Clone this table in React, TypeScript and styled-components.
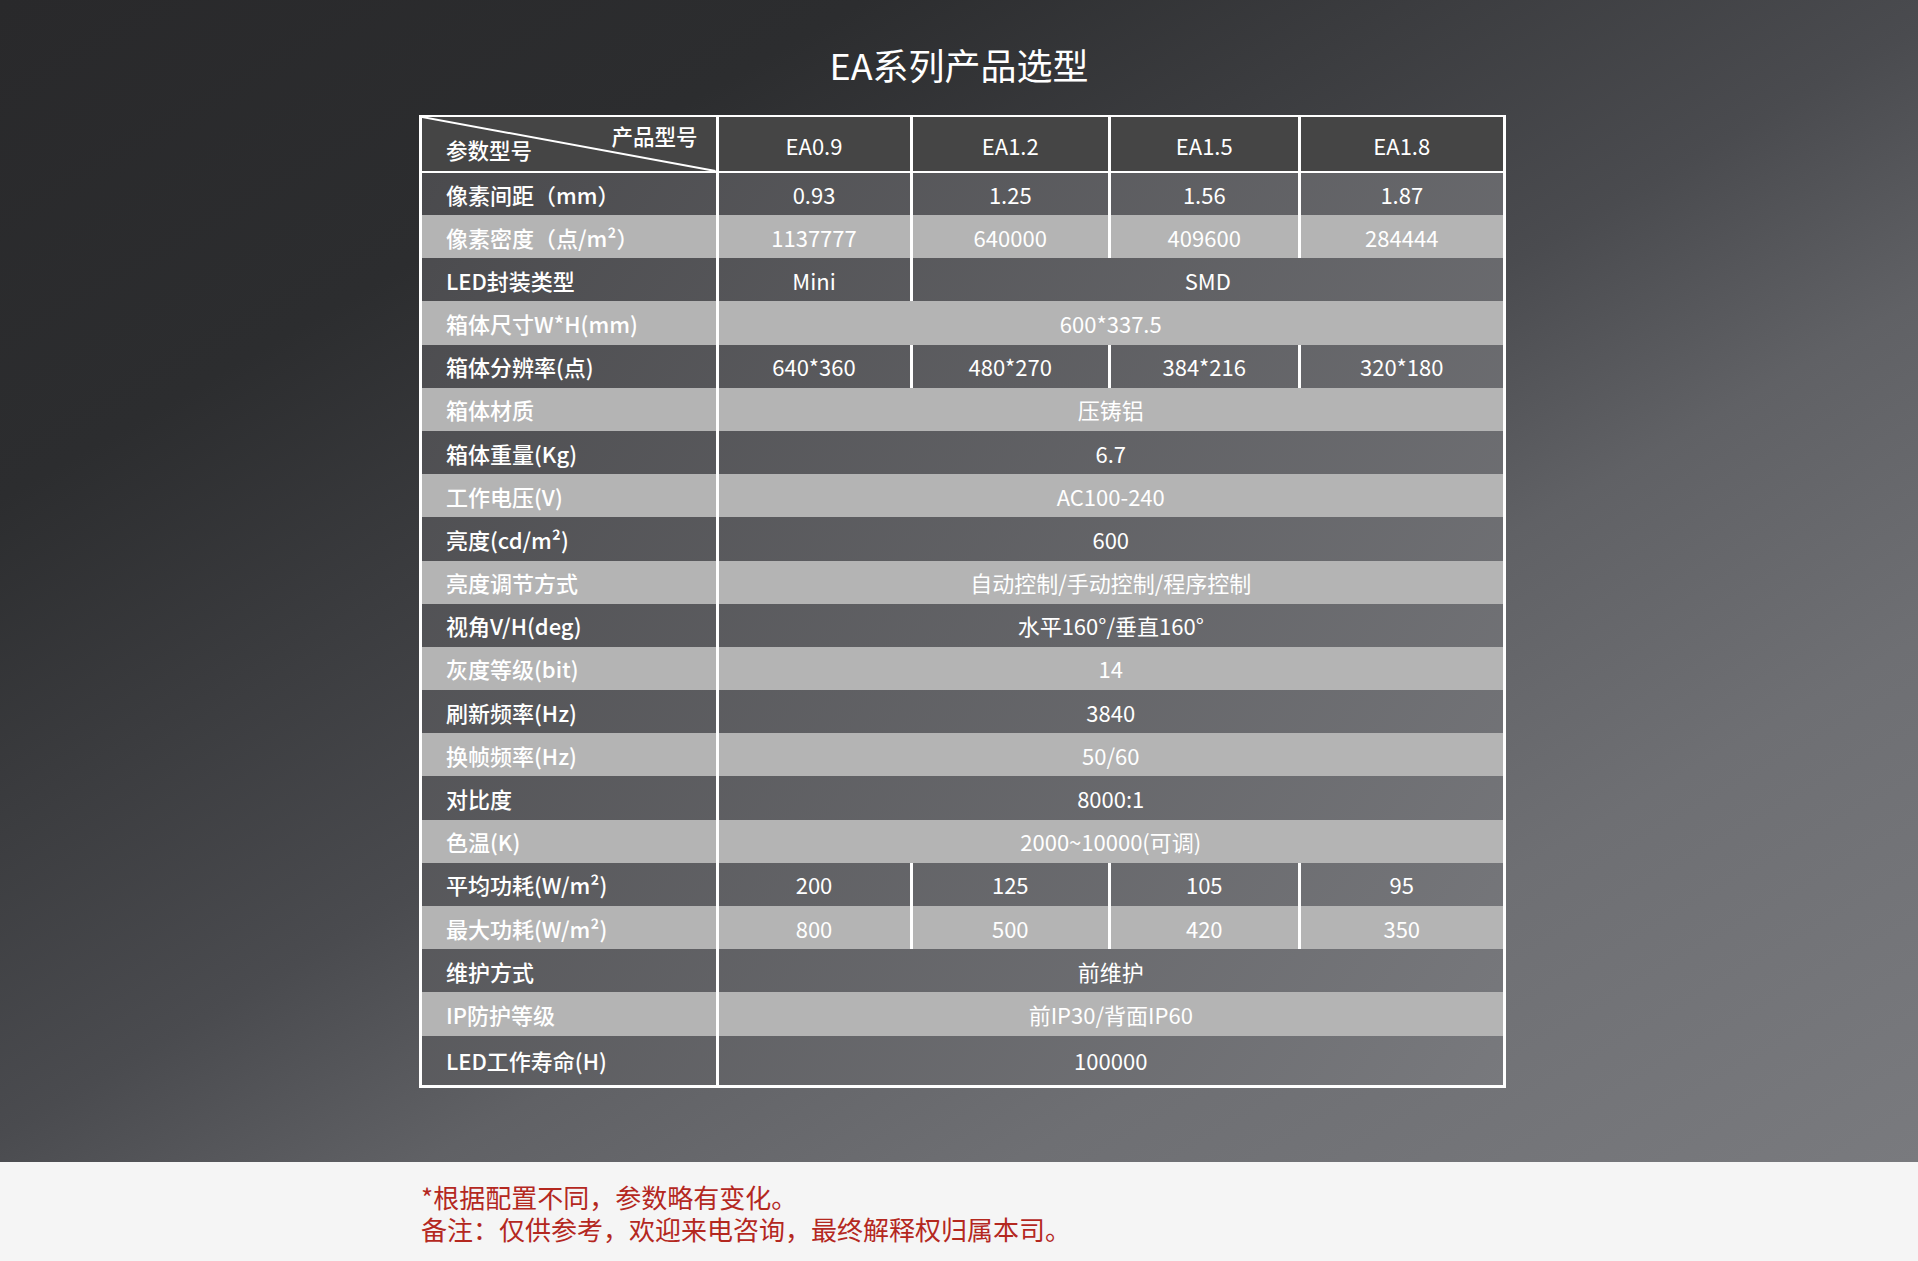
import styled, { createGlobalStyle } from 'styled-components';

const GlobalStyle = createGlobalStyle`
  html, body {
    margin: 0;
    padding: 0;
  }
  body {
    background: #f5f5f5;
    font-family: 'Noto Sans CJK SC', 'Noto Sans', 'Liberation Sans', sans-serif;
  }
`;

const Page = styled.div`
  width: 1918px;
  min-height: 1261px;
  display: flex;
  flex-direction: column;
`;

const Hero = styled.section`
  display: flex;
  flex-direction: column;
  padding: 42px 0 74px;
  background: linear-gradient(
    150deg,
    #29292b 0%,
    #2c2d2f 22%,
    #4a4b4f 50%,
    #606165 62%,
    #6e6f73 77%,
    #797a7e 100%
  );
`;

const Title = styled.h1`
  margin: 0;
  text-align: center;
  color: #fff;
  font-size: 36px;
  line-height: 44px;
  font-weight: 400;
`;

const Sheet = styled.div`
  width: 1081px;
  margin: 29px 0 0 419px;
  border: 3px solid #fff;
  border-top-width: 2px;
  background: linear-gradient(125deg, #49494c 0%, #78797d 100%);
`;

type Tone = 'head' | 'dark' | 'light';

const Row = styled.div<{ $tone: Tone; $h: number }>`
  display: grid;
  grid-template-columns: 293.5px 194px 198.5px 189.5px 205.5px;
  box-sizing: border-box;
  height: ${(p) => p.$h}px;
  background: ${(p) =>
    p.$tone === 'head' ? '#454545' : p.$tone === 'light' ? '#b4b4b4' : 'transparent'};
  border-bottom: ${(p) => (p.$tone === 'head' ? '2px solid #fff' : 'none')};
`;

const Label = styled.div`
  display: flex;
  align-items: center;
  padding-left: 24px;
  color: #fff;
  font-size: 22px;
  font-weight: 500;
  white-space: nowrap;
`;

const Corner = styled.div`
  position: relative;
  display: flex;
  flex-direction: column;
  justify-content: space-between;
  padding: 12px 18px 14px 24px;
  color: #fff;
  font-size: 21.5px;
  line-height: 14px;
  font-weight: 500;
  white-space: nowrap;
`;

const CornerLine = styled.svg`
  position: absolute;
  inset: 0;
  width: 100%;
  height: 100%;
`;

const CornerTop = styled.span`
  align-self: flex-end;
`;

const CornerBottom = styled.span`
  align-self: flex-start;
`;

const Cell = styled.div<{ $span: number; $head?: boolean }>`
  grid-column: span ${(p) => p.$span};
  display: flex;
  align-items: center;
  justify-content: center;
  border-left: 3px solid #fff;
  padding-top: ${(p) => (p.$head ? 2 : 0)}px;
  color: #fff;
  font-size: 22px;
  font-weight: 400;
  white-space: nowrap;
`;

const Notes = styled.section`
  flex: 1;
  padding: 19px 0 0 421px;
  background: #f5f5f5;
  color: #b4281f;
  font-size: 26px;
  line-height: 32px;
`;

const NoteLine = styled.p`
  margin: 0;
`;

type Spec = { label: string; values: [string, number][] };

const models = ['EA0.9', 'EA1.2', 'EA1.5', 'EA1.8'];

const specs: Spec[] = [
  { label: '像素间距（mm）', values: [['0.93', 1], ['1.25', 1], ['1.56', 1], ['1.87', 1]] },
  { label: '像素密度（点/m²）', values: [['1137777', 1], ['640000', 1], ['409600', 1], ['284444', 1]] },
  { label: 'LED封装类型', values: [['Mini', 1], ['SMD', 3]] },
  { label: '箱体尺寸W*H(mm)', values: [['600*337.5', 4]] },
  { label: '箱体分辨率(点)', values: [['640*360', 1], ['480*270', 1], ['384*216', 1], ['320*180', 1]] },
  { label: '箱体材质', values: [['压铸铝', 4]] },
  { label: '箱体重量(Kg)', values: [['6.7', 4]] },
  { label: '工作电压(V)', values: [['AC100-240', 4]] },
  { label: '亮度(cd/m²)', values: [['600', 4]] },
  { label: '亮度调节方式', values: [['自动控制/手动控制/程序控制', 4]] },
  { label: '视角V/H(deg)', values: [['水平160°/垂直160°', 4]] },
  { label: '灰度等级(bit)', values: [['14', 4]] },
  { label: '刷新频率(Hz)', values: [['3840', 4]] },
  { label: '换帧频率(Hz)', values: [['50/60', 4]] },
  { label: '对比度', values: [['8000:1', 4]] },
  { label: '色温(K)', values: [['2000~10000(可调)', 4]] },
  { label: '平均功耗(W/m²)', values: [['200', 1], ['125', 1], ['105', 1], ['95', 1]] },
  { label: '最大功耗(W/m²)', values: [['800', 1], ['500', 1], ['420', 1], ['350', 1]] },
  { label: '维护方式', values: [['前维护', 4]] },
  { label: 'IP防护等级', values: [['前IP30/背面IP60', 4]] },
  { label: 'LED工作寿命(H)', values: [['100000', 4]] },
];

const rowHeight = (i: number) => {
  if (i === 0) return 42;
  if (i === specs.length - 1) return 49;
  return 43.2;
};

const App = () => {
  return (
    <>
      <GlobalStyle />
      <Page>
        <Hero>
          <Title>EA系列产品选型</Title>
          <Sheet>
            <Row $tone="head" $h={56}>
              <Corner>
                <CornerLine viewBox="0 0 100 100" preserveAspectRatio="none">
                  <line
                    x1="0"
                    y1="0"
                    x2="100"
                    y2="100"
                    stroke="#fff"
                    strokeWidth="2"
                    vectorEffect="non-scaling-stroke"
                  />
                </CornerLine>
                <CornerTop>产品型号</CornerTop>
                <CornerBottom>参数型号</CornerBottom>
              </Corner>
              {models.map((m) => (
                <Cell key={m} $span={1} $head>
                  {m}
                </Cell>
              ))}
            </Row>
            {specs.map((s, i) => (
              <Row key={s.label} $tone={i % 2 === 0 ? 'dark' : 'light'} $h={rowHeight(i)}>
                <Label>{s.label}</Label>
                {s.values.map(([v, span], j) => (
                  <Cell key={j} $span={span}>
                    {v}
                  </Cell>
                ))}
              </Row>
            ))}
          </Sheet>
        </Hero>
        <Notes>
          <NoteLine>*根据配置不同，参数略有变化。</NoteLine>
          <NoteLine>备注：仅供参考，欢迎来电咨询，最终解释权归属本司。</NoteLine>
        </Notes>
      </Page>
    </>
  );
};

export default App;
